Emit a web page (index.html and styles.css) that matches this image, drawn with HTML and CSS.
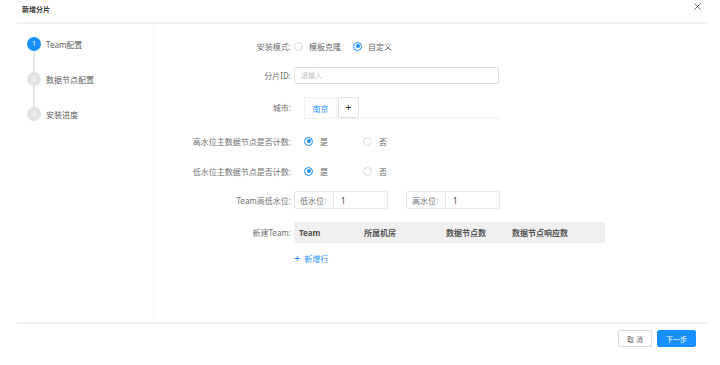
FILE: index.html
```html
<!DOCTYPE html>
<html lang="zh-CN">
<head>
    <meta charset="UTF-8">
    <meta name="viewport" content="width=device-width, initial-scale=1.0">
    <title>新增分片</title>
    <link rel="stylesheet" href="styles.css">
</head>
<body>
    <div class="modal">
        <div class="modal-header">
            <span class="title">新增分片</span>
            <svg class="close" width="7" height="7" viewBox="0 0 7 7">
                <path d="M0.5 0.5 L6.5 6.5 M6.5 0.5 L0.5 6.5" stroke="#555" stroke-width="0.9" fill="none"/>
            </svg>
        </div>

        <div class="modal-body">
            <div class="steps">
                <div class="step active">
                    <span class="step-num">1</span>
                    <span class="step-text">Team配置</span>
                </div>
                <div class="step-line"></div>
                <div class="step">
                    <span class="step-num">2</span>
                    <span class="step-text">数据节点配置</span>
                </div>
                <div class="step-line"></div>
                <div class="step">
                    <span class="step-num">3</span>
                    <span class="step-text">安装进度</span>
                </div>
            </div>

            <div class="form">
                <div class="form-item row-mode">
                    <label class="form-label">安装模式:</label>
                    <div class="radio-group">
                        <span class="radio"><i class="radio-dot"></i>模板克隆</span>
                        <span class="radio checked"><i class="radio-dot"></i>自定义</span>
                    </div>
                </div>

                <div class="form-item row-id">
                    <label class="form-label">分片ID:</label>
                    <input class="text-input" type="text" placeholder="请输入">
                </div>

                <div class="form-item row-city">
                    <label class="form-label">城市:</label>
                    <div class="tabs">
                        <span class="tab active">南京</span>
                        <span class="tab-add">+</span>
                    </div>
                </div>

                <div class="form-item row-high">
                    <label class="form-label">高水位主数据节点是否计数:</label>
                    <div class="radio-group indent">
                        <span class="radio checked"><i class="radio-dot"></i>是</span>
                        <span class="radio"><i class="radio-dot"></i>否</span>
                    </div>
                </div>

                <div class="form-item row-low">
                    <label class="form-label">低水位主数据节点是否计数:</label>
                    <div class="radio-group indent">
                        <span class="radio checked"><i class="radio-dot"></i>是</span>
                        <span class="radio"><i class="radio-dot"></i>否</span>
                    </div>
                </div>

                <div class="form-item row-water">
                    <label class="form-label">Team高低水位:</label>
                    <div class="input-group">
                        <span class="addon">低水位:</span>
                        <span class="group-value">1</span>
                    </div>
                    <div class="input-group second">
                        <span class="addon">高水位:</span>
                        <span class="group-value">1</span>
                    </div>
                </div>

                <div class="form-item row-team">
                    <label class="form-label">新建Team:</label>
                    <div class="table-head">
                        <span class="col c1">Team</span>
                        <span class="col c2">所属机房</span>
                        <span class="col c3">数据节点数</span>
                        <span class="col c4">数据节点响应数</span>
                    </div>
                </div>

                <div class="form-item row-add">
                    <span class="form-label"></span>
                    <span class="add-row"><b>+</b>新增行</span>
                </div>
            </div>
        </div>

        <div class="modal-footer">
            <button class="btn">取 消</button>
            <button class="btn primary">下一步</button>
        </div>
    </div>
</body>
</html>
```

FILE: styles.css
```css
body {
    margin: 0;
    padding: 0;
    background-color: #ffffff;
    font-family: 'Noto Sans', 'Noto Sans CJK SC', sans-serif;
    font-size: 8px;
    color: #707070;
}

.modal {
    width: 720px;
    height: 365px;
}

.modal-header {
    height: 22px;
    margin: 0 12px 0 17px;
    padding-left: 5px;
    border-bottom: 2px solid #f2f2f2;
    display: flex;
    justify-content: space-between;
}

.title {
    font-size: 7px;
    font-weight: bold;
    color: #333;
    line-height: 20px;
}

.close {
    margin-top: 3px;
    margin-right: 7px;
}

.modal-body {
    height: 298px;
    display: flex;
}

.steps {
    width: 126px;
    height: 283px;
    margin-left: 17px;
    padding: 13px 0 0 10px;
    border-right: 1px solid #f0f0f0;
    display: flex;
    flex-direction: column;
}

.step {
    display: flex;
    align-items: center;
    height: 14px;
}

.step-num {
    width: 14px;
    height: 14px;
    border-radius: 50%;
    background-color: #e3e3e3;
    color: #fff;
    font-size: 7px;
    line-height: 14px;
    text-align: center;
}

.step.active .step-num {
    background-color: #1890ff;
}

.step-text {
    margin-left: 5px;
    color: #606060;
}

.step-line {
    width: 2px;
    height: 21px;
    margin-left: 6px;
    background-color: #e6e6e6;
}

.form {
    flex: 1;
    padding-top: 13px;
}

.form-item {
    display: flex;
    align-items: center;
}

.form-label {
    width: 137px;
    text-align: right;
    padding-right: 3px;
    color: #707070;
    flex-shrink: 0;
}

.row-mode { height: 18px; margin-bottom: 11px; }
.row-id { height: 19px; margin-bottom: 12px; }
.row-city { height: 21px; margin-bottom: 14px; align-items: flex-start; }
.row-city .form-label { line-height: 21px; }
.row-high { height: 18px; margin-bottom: 12px; }
.row-low { height: 18px; margin-bottom: 11px; }
.row-water { height: 18px; margin-bottom: 13px; }
.row-team { height: 21px; margin-bottom: 7px; }
.row-add { height: 16px; }

.radio-group {
    display: flex;
    align-items: center;
}

.radio-group.indent {
    padding-left: 10px;
}

.radio {
    display: flex;
    align-items: center;
    width: 59px;
    color: #666;
}

.radio-dot {
    width: 7px;
    height: 7px;
    border: 1px solid #d9d9d9;
    border-radius: 50%;
    margin-right: 6px;
    position: relative;
    box-sizing: content-box;
}

.radio.checked .radio-dot {
    border-color: #1890ff;
}

.radio.checked .radio-dot::after {
    content: '';
    position: absolute;
    left: 1.5px;
    top: 1.5px;
    width: 4px;
    height: 4px;
    border-radius: 50%;
    background-color: #1890ff;
}

.indent .radio-dot {
    margin-right: 7px;
}

.text-input {
    width: 205px;
    height: 17px;
    box-sizing: border-box;
    border: 1px solid #e0e0e0;
    border-radius: 2px;
    padding: 0 6px;
    font-family: inherit;
    font-size: 7px;
    color: #333;
    outline: none;
}

.text-input::placeholder {
    color: #c0c0c0;
}

.tabs {
    margin-left: 10px;
    width: 195px;
    height: 21px;
    border-bottom: 1px solid #f0f0f0;
    display: flex;
    align-items: flex-start;
}

.tab {
    width: 33px;
    height: 21px;
    line-height: 21px;
    text-align: center;
    border: 1px solid #f0f0f0;
    border-bottom: none;
    box-sizing: border-box;
    color: #1890ff;
    background-color: #fff;
}

.tab-add {
    width: 21px;
    height: 21px;
    margin-left: 1px;
    box-sizing: border-box;
    border: 1px solid #e0e0e0;
    border-radius: 2px;
    text-align: center;
    line-height: 18px;
    font-size: 11px;
    color: #333;
}

.input-group {
    width: 94px;
    height: 18px;
    box-sizing: border-box;
    border: 1px solid #e6e6e6;
    border-radius: 2px;
    display: flex;
    align-items: center;
}

.input-group.second {
    margin-left: 18px;
}

.addon {
    width: 39px;
    height: 100%;
    box-sizing: border-box;
    border-right: 1px solid #e6e6e6;
    display: flex;
    align-items: center;
    padding-left: 5px;
    color: #707070;
}

.group-value {
    padding-left: 7px;
    color: #444;
}

.table-head {
    width: 311px;
    height: 21px;
    background-color: #f0f0f0;
    display: flex;
    align-items: center;
    font-weight: bold;
    color: #555;
}

.col { padding-left: 5px; }
.c1 { width: 60px; }
.c2 { width: 77px; }
.c3 { width: 61px; }

.add-row {
    color: #1890ff;
    display: flex;
    align-items: center;
}

.add-row b {
    font-size: 11px;
    font-weight: normal;
    margin-right: 4px;
    line-height: 10px;
}

.modal-footer {
    margin: 0 12px 0 17px;
    border-top: 2px solid #f2f2f2;
    display: flex;
    justify-content: flex-end;
    padding: 6px 12px 0 0;
}

.btn {
    height: 17px;
    padding: 0;
    border: 1px solid #dcdcdc;
    border-radius: 2px;
    background-color: #fff;
    font-family: inherit;
    font-size: 7px;
    color: #666;
    width: 34px;
    cursor: pointer;
}

.btn.primary {
    width: 39px;
    margin-left: 5px;
    background-color: #1890ff;
    border-color: #1890ff;
    color: #fff;
}
```
